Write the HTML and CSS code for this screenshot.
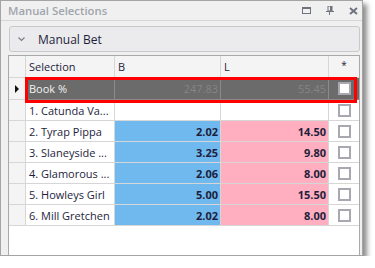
FILE: index.html
```html
<!DOCTYPE html>
<html lang="en">
<head>
    <meta charset="UTF-8">
    <title>Manual Selections</title>
    <link rel="stylesheet" href="styles.css">
</head>
<body>
    <div class="window">
        <div class="titlebar">
            <span class="title">Manual Selections</span>
            <div class="title-icons">
                <svg width="9" height="7" viewBox="0 0 9 7"><rect x="0.5" y="0.5" width="8" height="6" fill="none" stroke="#6e737d"/><rect x="0" y="0" width="9" height="2" fill="#6e737d"/></svg>
                <svg width="8" height="9" viewBox="0 0 8 9"><rect x="2" y="0" width="4" height="5" fill="none" stroke="#6e737d"/><rect x="4" y="0" width="2" height="5" fill="#6e737d"/><rect x="0" y="5" width="8" height="1" fill="#6e737d"/><rect x="3" y="6" width="1" height="3" fill="#6e737d"/></svg>
                <svg width="9" height="8" viewBox="0 0 9 8"><path d="M1 1 L8 7 M8 1 L1 7" stroke="#6e737d" stroke-width="2"/></svg>
            </div>
        </div>
        <div class="panel">
            <div class="group-header">
                <svg class="chevron" width="7" height="5" viewBox="0 0 7 5"><path d="M0.5 0.5 L3.5 3.5 L6.5 0.5" fill="none" stroke="#7a7e86" stroke-width="1.2"/></svg>
                <span>Manual Bet</span>
            </div>
            <div class="grid">
                <div class="row head">
                    <div class="cell rowhead"></div>
                    <div class="cell">Selection</div>
                    <div class="cell">B</div>
                    <div class="cell">L</div>
                    <div class="cell star">*</div>
                </div>
                <div class="row book">
                    <div class="cell rowhead"><span class="arrow"></span></div>
                    <div class="cell">Book %</div>
                    <div class="cell num">247.83</div>
                    <div class="cell num">55.45</div>
                    <div class="cell check"><span class="box"></span></div>
                </div>
                <div class="row">
                    <div class="cell rowhead"></div>
                    <div class="cell">1. Catunda Va...</div>
                    <div class="cell"></div>
                    <div class="cell"></div>
                    <div class="cell check"><span class="box"></span></div>
                </div>
                <div class="row">
                    <div class="cell rowhead"></div>
                    <div class="cell">2. Tyrap Pippa</div>
                    <div class="cell num back">2.02</div>
                    <div class="cell num lay">14.50</div>
                    <div class="cell check"><span class="box"></span></div>
                </div>
                <div class="row">
                    <div class="cell rowhead"></div>
                    <div class="cell">3. Slaneyside ...</div>
                    <div class="cell num back">3.25</div>
                    <div class="cell num lay">9.80</div>
                    <div class="cell check"><span class="box"></span></div>
                </div>
                <div class="row">
                    <div class="cell rowhead"></div>
                    <div class="cell">4. Glamorous ...</div>
                    <div class="cell num back">2.06</div>
                    <div class="cell num lay">8.00</div>
                    <div class="cell check"><span class="box"></span></div>
                </div>
                <div class="row">
                    <div class="cell rowhead"></div>
                    <div class="cell">5. Howleys Girl</div>
                    <div class="cell num back">5.00</div>
                    <div class="cell num lay">15.50</div>
                    <div class="cell check"><span class="box"></span></div>
                </div>
                <div class="row">
                    <div class="cell rowhead"></div>
                    <div class="cell">6. Mill Gretchen</div>
                    <div class="cell num back">2.02</div>
                    <div class="cell num lay">8.00</div>
                    <div class="cell check"><span class="box"></span></div>
                </div>
                <div class="highlight"></div>
            </div>
        </div>
    </div>
</body>
</html>
```

FILE: styles.css
```css
body {
    margin: 0;
    background-color: #fff;
    font-family: "Open Sans", "Noto Sans", sans-serif;
}
.window {
    width: 361px;
    height: 254px;
    border: 1px solid #a4a4a4;
    background-color: #f0f0f0;
    box-shadow: 4px 4px 5px rgba(0, 0, 0, 0.45);
    display: flex;
    flex-direction: column;
}
.titlebar {
    height: 19px;
    display: flex;
    align-items: center;
    justify-content: space-between;
    padding-left: 7px;
    border-bottom: 1px solid #d6d6d6;
}
.title {
    color: #a0a5ad;
    font-weight: 600;
    font-size: 11.3px;
}
.title-icons {
    display: flex;
    align-items: center;
    gap: 15px;
    padding-right: 4px;
}
.panel {
    flex: 1;
    display: flex;
    flex-direction: column;
    padding: 5px 2px 0 7px;
}
.group-header {
    height: 24px;
    border: 1px solid #c9c9c9;
    border-radius: 3px;
    background-color: #ebebed;
    display: flex;
    align-items: center;
    font-size: 12px;
    color: #1e1e3c;
    margin-left: 1px;
}
.chevron {
    margin-left: 8px;
    margin-right: 13px;
}
.grid {
    flex: 1;
    margin-top: 3px;
    border: 1px solid #a9a9a9;
    border-bottom: none;
    background-color: #fff;
    position: relative;
    font-size: 11px;
    color: #1e1e3c;
}
.row {
    display: grid;
    grid-template-columns: 17px 89px 106px 108px 30px;
    height: 21px;
}
.row.head, .row.book {
    height: 22px;
}
.cell {
    border-right: 1px solid #d6d6d6;
    border-bottom: 1px solid #d6d6d6;
    display: flex;
    align-items: center;
    padding-left: 3px;
    white-space: nowrap;
    overflow: hidden;
}
.cell:last-child {
    border-right: none;
}
.rowhead {
    background-color: #f4f4f4;
    padding-left: 0;
    justify-content: center;
}
.head .cell {
    background-color: #f4f4f4;
}
.star {
    justify-content: center;
    padding-left: 0;
    font-size: 10px;
    padding-bottom: 4px;
}
.num {
    justify-content: flex-end;
    padding-right: 2px;
    font-weight: bold;
}
.back {
    background-color: #6fb9ee;
}
.lay {
    background-color: #ffafbf;
}
.book .cell {
    background-color: #6b6b6b;
    color: #f2f2f2;
    border-color: #8a8a8a;
}
.book .rowhead {
    background-color: #f4f4f4;
    border-color: #d6d6d6;
}
.book .num {
    color: #858585;
    font-weight: normal;
}
.arrow {
    width: 0;
    height: 0;
    border-top: 4px solid transparent;
    border-bottom: 4px solid transparent;
    border-left: 4px solid #111;
}
.check {
    justify-content: center;
    padding-left: 0;
}
.box {
    width: 9px;
    height: 9px;
    border: 2px solid #a8a8b0;
    background-color: #fff;
}
.highlight {
    position: absolute;
    left: 16px;
    top: 21px;
    width: 326px;
    height: 20px;
    border: 3px solid #ff0000;
}
```
